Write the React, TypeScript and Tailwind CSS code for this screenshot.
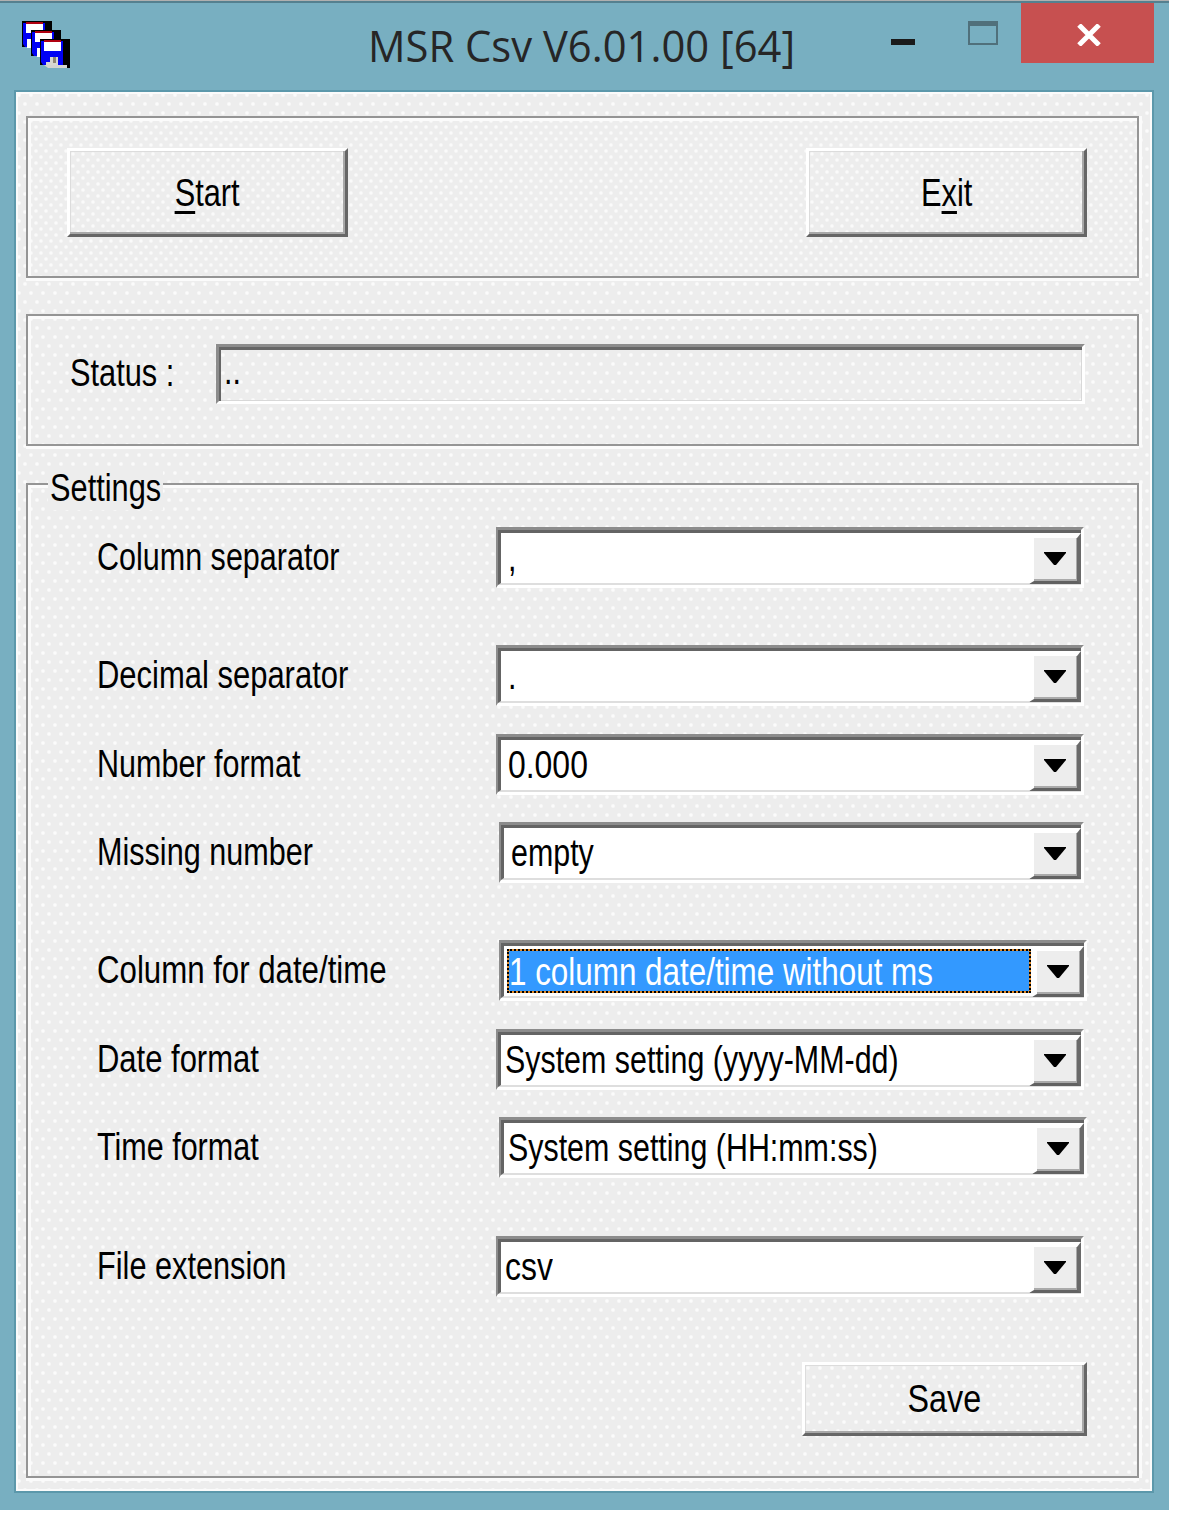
import React from "react";

const dots =
  "bg-[#ededed] bg-[radial-gradient(circle_at_3px_3px,#fbfbfb_1.2px,transparent_2.4px),radial-gradient(circle_at_9px_12px,#fbfbfb_1.2px,transparent_2.4px)] bg-[length:12px_18px]";
const denseDots =
  "bg-[#ededed] bg-[radial-gradient(circle_at_3px_3px,#fafafa_1.1px,transparent_2.3px),radial-gradient(circle_at_8px_9px,#fafafa_1.1px,transparent_2.3px)] bg-[length:10px_12px]";

function Text({ children, className = "" }: { children: React.ReactNode; className?: string }) {
  return (
    <span className={"inline-block whitespace-pre text-[38px] leading-[44px] " + (className || "origin-left scale-x-[0.8]")}>
      {children}
    </span>
  );
}

function Group({ children, className }: { children: React.ReactNode; className: string }) {
  return (
    <div className={"border-[2px] border-[#959595] shadow-[inset_3px_3px_0_#fbfbfb,0_3px_0_#fbfbfb,3px_0_0_#fbfbfb] " + className}>
      {children}
    </div>
  );
}

function PushButton({ children, className }: { children: React.ReactNode; className: string }) {
  return (
    <button
      className={
        "flex items-center justify-center border-[3px] border-t-white border-l-white border-r-[#666] border-b-[#666] shadow-[inset_-2px_-2px_0_#a8a8a8,inset_1px_1px_0_#dcdcdc] text-black " +
        className
      }
    >
      {children}
    </button>
  );
}

function Combo({ value, shift, pad, selected, valueScale }: Omit<Row, "label" | "gap" | "labelScale">) {
  return (
    <div
      className={
        "flex h-[61px] border-t-[3px] border-l-[2px] border-b-[3px] border-r-[3px] border-t-[#8c8c8c] border-l-[#8c8c8c] border-b-white border-r-white " +
        shift
      }
    >
      <div className="flex min-w-0 flex-1 border-t-[3px] border-l-[3px] border-b-[2px] border-t-[#646464] border-l-[#646464] border-b-[#dedede] bg-white">
        {selected ? (
          <div className="mt-[3px] mr-[1px] mb-[3px] ml-[3px] flex min-w-0 flex-1 border-2 border-dotted border-black bg-[#e08a28]">
            <div className="flex min-w-0 flex-1 items-center bg-[#3399ff]">
              <Text className="mt-[2px] w-[420px] origin-left scale-x-[0.826] text-white">{value}</Text>
            </div>
          </div>
        ) : (
          <div className={"flex min-w-0 flex-1 items-center " + pad}>
            <Text className={valueScale}>{value}</Text>
          </div>
        )}
        <div className="mb-[-1px] flex w-[52px] shrink-0 items-center justify-center border-t-[5px] border-l-[5px] border-r-[4px] border-b-[3px] border-t-white border-l-white border-r-[#6a6a6a] border-b-[#626262] bg-[#ededed] shadow-[inset_-1px_-2px_0_#aaa]">
          <svg className="mr-[2px] mb-[3px] h-[13px] w-[22px]" viewBox="0 0 22 13">
            <path d="M0 0H22V1L12 13H10L0 1Z" fill="#000" />
          </svg>
        </div>
      </div>
    </div>
  );
}

type Row = {
  label: string;
  labelScale: string;
  value: string;
  valueScale?: string;
  gap: string;
  shift: string;
  pad: string;
  selected?: boolean;
};

const narrow = "w-[588px]";
const shifted = "ml-[3px] w-[588px]";
const short = "ml-[3px] w-[585px]";

const rows: Row[] = [
  { label: "Column separator", labelScale: "origin-left scale-x-[0.803]", value: ",", gap: "", shift: narrow, pad: "pl-[7px]" },
  { label: "Decimal separator", labelScale: "origin-left scale-x-[0.815]", value: ".", gap: "mt-[57px]", shift: narrow, pad: "pl-[7px]" },
  { label: "Number format", labelScale: "origin-left scale-x-[0.803]", value: "0.000", valueScale: "origin-left scale-x-[0.84]", gap: "mt-[28px]", shift: narrow, pad: "pl-[7px]" },
  { label: "Missing number", labelScale: "origin-left scale-x-[0.805]", value: "empty", gap: "mt-[27px]", shift: short, pad: "pl-[7px]" },
  { label: "Column for date/time", labelScale: "origin-left scale-x-[0.821]", value: "1 column date/time without ms", gap: "mt-[57px]", shift: shifted, pad: "", selected: true },
  { label: "Date format", labelScale: "origin-left scale-x-[0.815]", value: "System setting (yyyy-MM-dd)", gap: "mt-[28px]", shift: narrow, pad: "pl-[4px]" },
  { label: "Time format", labelScale: "origin-left scale-x-[0.803]", value: "System setting (HH:mm:ss)", gap: "mt-[27px]", shift: shifted, pad: "pl-[4px]" },
  { label: "File extension", labelScale: "origin-left scale-x-[0.808]", value: "csv", valueScale: "origin-left scale-x-[0.84]", gap: "mt-[58px]", shift: narrow, pad: "pl-[4px]" },
];

function Floppy({ x, y }: { x: number; y: number }) {
  return (
    <g transform={`translate(${x} ${y})`}>
      <path d="M0 0H30V29H27V26H0Z" fill="#000" />
      <path d="M1 2H23V26H3L1 23Z" fill="#0000f4" />
      <path d="M4 1H21V4H4Z" fill="#b00010" />
      <path d="M4 3H21V12H4Z" fill="#fff" />
      <path d="M6 18H18V27H6Z" fill="#d8d8d0" />
      <path d="M6 18H10V23H6Z" fill="#0000f4" />
      <path d="M13 18H16V24H13Z" fill="#8c8474" />
    </g>
  );
}

export default function App() {
  return (
    <div className="h-[1517px] w-[1177px] overflow-hidden bg-white font-['Liberation_Sans',Arial,sans-serif] text-black">
      <div className="flex h-[1510px] w-[1169px] flex-col border-t-[1px] border-[#b0b0b0] bg-[#78afc1] shadow-[inset_0_2px_0_#55808f]">
        <header className="flex h-[89px] shrink-0 items-start">
          <svg className="mt-[20px] ml-[22px] h-[48px] w-[48px] shrink-0" viewBox="0 0 48 48">
            <Floppy x={0} y={0} />
            <path d="M5 18H9V27H5Z" fill="#fff" />
            <Floppy x={9} y={9} />
            <path d="M15 27H18V36H15Z" fill="#fff" />
            <Floppy x={18} y={18} />
            <path d="M22 44H45V47H26Z" fill="#d4d4d0" />
          </svg>
          <h1 className="mt-[15px] ml-[298px] w-[523px] shrink-0 origin-left scale-x-[0.971] whitespace-pre font-['Open_Sans',sans-serif] text-[43px] leading-[60px] text-[#262626]">
            MSR Csv V6.01.00 [64]
          </h1>
          <div className="mt-[38px] h-[6px] w-[24px] shrink-0 bg-[#1a1a1a]" />
          <div className="mt-[20px] ml-[53px] h-[24px] w-[30px] shrink-0 border-2 border-t-[5px] border-[#50707b]" />
          <button className="mt-[2px] ml-[23px] flex h-[60px] w-[133px] shrink-0 items-center justify-center bg-[#c75050]">
            <svg className="mt-[3px] ml-[3px] h-[22px] w-[26px]" viewBox="0 0 26 22">
              <path d="M3 1L23 21M23 1L3 21" stroke="#fff" strokeWidth="5" />
            </svg>
          </button>
        </header>

        <main className={"ml-[14px] h-[1403px] w-[1140px] shrink-0 border-2 border-[#5c98ab] px-[10px] pt-[24px] shadow-[inset_2px_2px_0_#fbfbfb,inset_-2px_-2px_0_#fbfbfb] " + dots}>
          <Group className={"flex h-[162px] w-[1113px] justify-between pt-[30px] pr-[50px] pl-[39px] " + denseDots}>
            <PushButton className={"h-[89px] w-[281px] " + denseDots}>
              <Text className="scale-x-[0.81]">
                <span className="underline decoration-[3px] underline-offset-[5px]">S</span>tart
              </Text>
            </PushButton>
            <PushButton className={"h-[89px] w-[281px] " + denseDots}>
              <Text className="scale-x-[0.81]">
                E<span className="underline decoration-[3px] underline-offset-[5px]">x</span>it
              </Text>
            </PushButton>
          </Group>

          <Group className={"mt-[36px] flex h-[132px] w-[1113px] pt-[28px] pl-[42px] " + dots}>
            <div className="w-[146px] pt-[7px]">
              <Text className="origin-left scale-x-[0.81]">Status :</Text>
            </div>
            <div className="h-[60px] w-[869px] border-[3px] border-t-[#8c8c8c] border-l-[#8c8c8c] border-r-white border-b-white pt-[2px] pl-[5px] shadow-[inset_2px_3px_0_#666,inset_-1px_-1px_0_#d8d8d8]">
              <Text>..</Text>
            </div>
          </Group>

          <Group className="relative mt-[37px] h-[995px] w-[1113px] pt-[42px] pl-[69px]">
            <div className="absolute top-[-19px] left-[20px] h-[44px] w-[115px] bg-[#ededed] pl-[2px]">
              <Text className="origin-left scale-x-[0.81]">Settings</Text>
            </div>
            {rows.map((r) => (
              <div key={r.label} className={"flex " + r.gap}>
                <div className="w-[399px] pt-[8px]">
                  <Text className={r.labelScale}>{r.label}</Text>
                </div>
                <Combo value={r.value} valueScale={r.valueScale} shift={r.shift} pad={r.pad} selected={r.selected} />
              </div>
            ))}
            <PushButton className={"mt-[65px] ml-[705px] h-[74px] w-[285px] " + dots}>
              <Text className="scale-x-[0.85]">Save</Text>
            </PushButton>
          </Group>
        </main>
      </div>
    </div>
  );
}
